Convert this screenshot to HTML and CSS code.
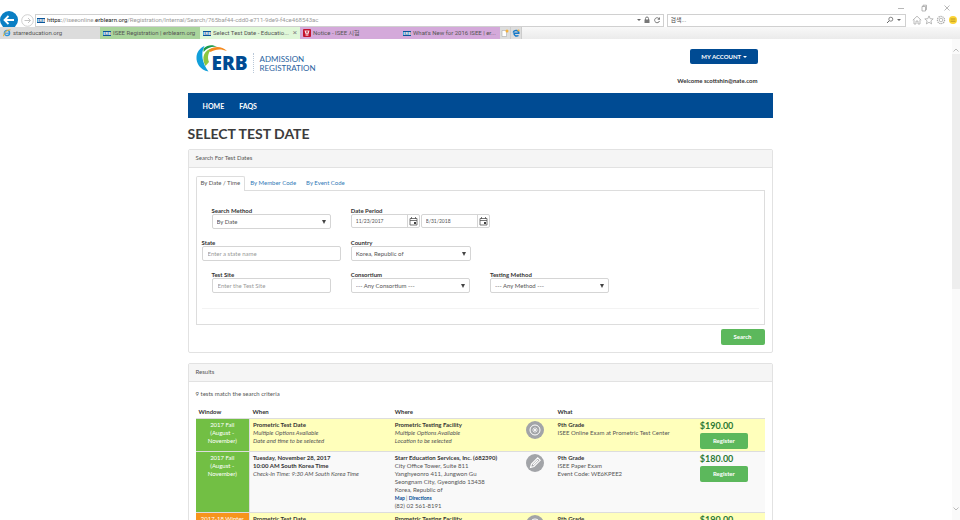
FILE: index.html
```html
<!DOCTYPE html>
<html lang="en">
	<head>
		<meta charset="UTF-8">
		<title>Select Test Date - Education Records Bureau</title>
		<link rel="stylesheet" href="styles.css">
	</head>
	<body>
		<!-- browser bar -->
		<div class="browser">
			<div class="wincontrols">
				<button class="win" aria-label="Minimize"><svg viewBox="0 0 8 8"><path d="M1 4.5h6"/></svg></button>
				<button class="win" aria-label="Restore"><svg viewBox="0 0 8 8"><path d="M2 2.5h3.5v4.5H2zM3 2.500V1.200h3.500v4.500H5.500"/></svg></button>
				<button class="win" aria-label="Close"><svg viewBox="0 0 8 8"><path d="M1.500 1.500l5 5M6.500 1.500l-5 5"/></svg></button>
			</div>
			<div class="address">
				<button class="back" aria-label="Back"><svg viewBox="0 0 18 18"><circle cx="9" cy="9" r="9" fill="#0a7fc4"/><path d="M14 9H5M8.500 5L4.500 9l4 4" fill="none" stroke="#fff" stroke-width="1.800"/></svg></button>
				<button class="forward" aria-label="Forward"><svg viewBox="0 0 13 13"><circle cx="6.500" cy="6.500" r="5.800" fill="#fff" stroke="#c4c4c4" stroke-width=".8"/><path d="M3.500 6.500h6M7 4l2.500 2.500L7 9" fill="none" stroke="#c4c4c4"/></svg></button>
				<div class="url">
					<span class="fav">ERB</span>
					<p><b>https:</b>//iseeonline.<b>erblearn.org</b>/Registration/Internal/Search/765baf44-cdd0-e711-9de9-f4ce468543ac</p>
					<span class="drop"></span>
					<svg class="small" viewBox="0 0 8 8"><path d="M1.500 3.500h5v3.500h-5z" fill="#777"/><path d="M2.500 4V2.500a1.500 1.500 0 0 1 3 0V4" fill="none" stroke="#777"/></svg>
					<svg class="small" viewBox="0 0 8 8"><path d="M6.300 3A2.500 2.500 0 1 0 6.500 5" fill="none" stroke="#777"/><path d="M7 1v2.700H4.300z" fill="#777"/></svg>
				</div>
				<div class="find">
					<input type="text" aria-label="Web search" placeholder="검색...">
					<svg class="small" viewBox="0 0 8 8"><circle cx="4.800" cy="3.200" r="2" fill="none" stroke="#666" stroke-width=".8"/><path d="M3.300 4.700L1 7" stroke="#666"/></svg>
					<span class="drop"></span>
				</div>
				<div class="tools">
					<svg viewBox="0 0 10 10"><path d="M.800 5.200L5 1.200l4.200 4M2 4.500V9h2V6h2v3h2V4.500" fill="none" stroke="#aaa" stroke-width=".8"/></svg>
					<svg viewBox="0 0 10 10"><path d="M5 .9l1.200 2.800 3 .2-2.300 2 .7 3L5 7.300 2.400 8.900l.7-3L.800 3.900l3-.2z" fill="none" stroke="#aaa" stroke-width=".8"/></svg>
					<svg viewBox="0 0 10 10"><circle cx="5" cy="5" r="3.600" fill="none" stroke="#aaa" stroke-width="1.200" stroke-dasharray="1.300 .7"/><circle cx="5" cy="5" r="1.800" fill="none" stroke="#aaa" stroke-width=".8"/></svg>
					<svg viewBox="0 0 10 10"><circle cx="5" cy="5" r="4" fill="#fbd436"/><path d="M2.500 4h5M2.500 6.200h5" stroke="#a8871c" stroke-width=".8"/></svg>
				</div>
			</div>
			<div class="tabs">
				<a href="#" class="tab gray"><svg class="ie" viewBox="0 0 8 8"><circle cx="4" cy="4" r="2.600" fill="none" stroke="#2a93dc" stroke-width="1.400"/><path d="M2 4.200h4.500" stroke="#2a93dc"/><path d="M.500 7.200C1 3 4 .8 7.500.800" fill="none" stroke="#efb52c"/></svg>starreducation.org</a>
				<a href="#" class="tab green"><span class="fav">ERB</span>ISEE Registration | erblearn.org</a>
				<a href="#" class="tab current"><span class="fav">ERB</span>Select Test Date - Educatio...<i>×</i></a>
				<a href="#" class="tab purple"><svg class="ie" viewBox="0 0 8 8"><rect width="8" height="8" rx="1" fill="#c4122e"/><path d="M1.500 2h5M2 4h4M3.200 4v3M4.800 4v3M2.500 2v2M5.500 2v2" stroke="#fff" stroke-width=".8"/></svg>Notice - ISEE 시험</a>
				<a href="#" class="tab purple"><span class="fav">ERB</span>What's New for 2016 ISEE | er...</a>
				<button class="newtab" aria-label="New tab"><svg viewBox="0 0 8 8"><path d="M1 1.500h4.500v6H1z" fill="#fff" stroke="#aaa" stroke-width=".6"/><circle cx="6" cy="2" r="1.500" fill="#f4b13c"/></svg></button>
				<button class="newtab" aria-label="Open in Edge"><svg viewBox="0 0 8 8"><path d="M1.500 4.300h5.300C7 1 2 .5 1.200 3.500M2 4.300C2 7.500 5 7.500 6.500 6.500" fill="none" stroke="#1478c8" stroke-width="1.500"/><circle cx="6.500" cy="1.500" r="1.100" fill="#f4b13c"/></svg></button>
			</div>
		</div>

		<div class="view">
			<div class="page">
				<div class="container">
					<div class="top">
						<a href="#" class="logo">
							<svg viewBox="0 0 32 28">
								<path d="M12.500 26.500C4 25 0 18 .5 12 .9 6.500 4 3 8.500 1 4.500 8 6 18 12.500 26.500z" fill="#119fda"/>
								<path d="M9.500 21C5 13 7.500 5 17 3 12 7 11 12 13 17z" fill="#8cc63f"/>
								<path d="M7.500 3.500C12-.5 17-.3 21 2 16 1.300 11.500 2.500 7.500 7z" fill="#1b9a4b"/>
								<path d="M13 5C18 .8 26 1 31 6 25 3.500 19 4 14.500 7z" fill="#f58a1f"/>
							</svg>
							<strong>ERB</strong>
							<span>ADMISSION<br>REGISTRATION</span>
						</a>
						<div class="user">
							<button class="account">MY ACCOUNT <i class="caret"></i></button>
							<p>Welcome scottshin@nate.com</p>
						</div>
					</div>
					<nav>
						<a href="#">HOME</a>
						<a href="#">FAQS</a>
					</nav>
					<h1>SELECT TEST DATE</h1>

					<!-- search -->
					<div class="panel">
						<h2>Search For Test Dates</h2>
						<form class="body">
							<div class="subtabs">
								<a href="#" class="on">By Date / Time</a>
								<a href="#">By Member Code</a>
								<a href="#">By Event Code</a>
							</div>
							<div class="pane">
								<div class="fields">
									<div class="field">
										<label for="method">Search Method</label>
										<div class="select"><select id="method"><option>By Date</option></select></div>
									</div>
									<div class="field wide">
										<label for="from">Date Period</label>
										<div class="dates">
											<div class="date">
												<input type="text" id="from" value="11/23/2017">
												<button type="button" aria-label="Pick start date"><svg viewBox="0 0 9 9"><path d="M1 1.500h7v6.500H1zM1 3.500h7M2.500 0v2M6.500 0v2" fill="none" stroke="#555" stroke-width=".8"/><path d="M5 5h2v2H5z" fill="#444"/></svg></button>
											</div>
											<div class="date">
												<input type="text" aria-label="End date" value="8/31/2018">
												<button type="button" aria-label="Pick end date"><svg viewBox="0 0 9 9"><path d="M1 1.500h7v6.500H1zM1 3.500h7M2.500 0v2M6.500 0v2" fill="none" stroke="#555" stroke-width=".8"/><path d="M5 5h2v2H5z" fill="#444"/></svg></button>
											</div>
										</div>
									</div>
									<div class="field flush">
										<label for="state">State</label>
										<input type="text" id="state" placeholder="Enter a state name">
									</div>
									<div class="field wide">
										<label for="country">Country</label>
										<div class="select half"><select id="country"><option>Korea, Republic of</option></select></div>
									</div>
									<div class="field">
										<label for="site">Test Site</label>
										<input type="text" id="site" placeholder="Enter the Test Site">
									</div>
									<div class="field">
										<label for="consortium">Consortium</label>
										<div class="select"><select id="consortium"><option>--- Any Consortium ---</option></select></div>
									</div>
									<div class="field">
										<label for="testing">Testing Method</label>
										<div class="select"><select id="testing"><option>--- Any Method ---</option></select></div>
									</div>
								</div>
							</div>
							<div class="actions"><button type="button" class="btn">Search</button></div>
						</form>
					</div>

					<!-- results -->
					<div class="panel">
						<h2>Results</h2>
						<div class="body">
							<p class="count">9 tests match the search criteria</p>
							<table>
								<thead>
									<tr>
										<th class="c1">Window</th>
										<th class="c2">When</th>
										<th class="c3">Where</th>
										<th class="c4"></th>
										<th class="c5">What</th>
										<th class="c6"></th>
									</tr>
								</thead>
								<tbody>
									<tr class="yellow">
										<td class="window">2017 Fall<br>(August -<br>November)</td>
										<td><b>Prometric Test Date</b><br><em>Multiple Options Available<br>Date and time to be selected</em></td>
										<td><b>Prometric Testing Facility</b><br><em>Multiple Options Available<br>Location to be selected</em></td>
										<td><svg class="kind" viewBox="0 0 18 18"><circle cx="9" cy="9" r="9" fill="#a2a4a8"/><circle cx="9" cy="9" r="5" fill="none" stroke="#fff"/><path d="M9 6v6M6 9h6M7 7l4 4M11 7l-4 4" stroke="#fff" stroke-width=".7"/></svg></td>
										<td><b>9th Grade</b><br>ISEE Online Exam at Prometric Test Center</td>
										<td><strong class="price">$190.00</strong><button class="btn register">Register</button></td>
									</tr>
									<tr>
										<td class="window">2017 Fall<br>(August -<br>November)</td>
										<td><b>Tuesday, November 28, 2017<br>10:00 AM South Korea Time</b><br><em>Check-In Time: 9:30 AM South Korea Time</em></td>
										<td><b>Starr Education Services, Inc. (682390)</b><br>City Office Tower, Suite 811<br>Yanghyeonro 411, Jungwon Gu<br>Seongnam City, Gyeongido 13438<br>Korea, Republic of<br><span class="links"><a href="#">Map</a> | <a href="#">Directions</a></span><br>(82) 02 561-8191</td>
										<td><svg class="kind" viewBox="0 0 18 18"><circle cx="9" cy="9" r="9" fill="#a2a4a8"/><path d="M4.500 13.500l1-3.500L11.700 3.800l2.500 2.500L8 12.500zM7 11l5-5" fill="none" stroke="#fff" stroke-width="1.100"/></svg></td>
										<td><b>9th Grade</b><br>ISEE Paper Exam<br>Event Code: WE6KPEE2</td>
										<td><strong class="price">$180.00</strong><button class="btn register">Register</button></td>
									</tr>
									<tr class="yellow">
										<td class="window winter">2017-18 Winter<br>(December -<br>March)</td>
										<td><b>Prometric Test Date</b><br><em>Multiple Options Available<br>Date and time to be selected</em></td>
										<td><b>Prometric Testing Facility</b><br><em>Multiple Options Available<br>Location to be selected</em></td>
										<td><svg class="kind" viewBox="0 0 18 18"><circle cx="9" cy="9" r="9" fill="#a2a4a8"/><circle cx="9" cy="9" r="5" fill="none" stroke="#fff"/><path d="M9 6v6M6 9h6M7 7l4 4M11 7l-4 4" stroke="#fff" stroke-width=".7"/></svg></td>
										<td><b>9th Grade</b><br>ISEE Online Exam at Prometric Test Center</td>
										<td><strong class="price">$190.00</strong><button class="btn register">Register</button></td>
									</tr>
								</tbody>
							</table>
						</div>
					</div>
				</div>
			</div>
			<div class="scroll">
				<svg viewBox="0 0 8 8"><path d="M1.500 5.500L4 3l2.500 2.500"/></svg>
				<div class="track"><div class="thumb"></div></div>
				<svg viewBox="0 0 8 8"><path d="M1.500 2.500L4 5l2.500-2.500"/></svg>
			</div>
		</div>
	</body>
</html>
```
FILE: styles.css
```css
*{
	padding:0;
	margin:0;
	box-sizing:border-box;
}
body{
	height:100vh;
	display:flex;
	flex-direction:column;
	overflow:hidden;
	background:#fff;
	color:#555;
	font:6px/8px Lato,"Noto Sans CJK KR",sans-serif;
}
a{
	color:#337ab7;
	text-decoration:none;
}
button,input,select{
	font:inherit;
	color:inherit;
	border:none;
	background:none;
}
svg{
	display:block;
	flex:none;
}

/* browser bar */
.browser{
	font-family:Roboto,"Noto Sans CJK KR",sans-serif;
}
.wincontrols{
	height:13px;
	display:flex;
	justify-content:flex-end;
	gap:15px;
	padding:2px 9px 0 0;
}
.win svg{
	width:8px;
	height:8px;
	fill:none;
	stroke:#999;
	stroke-width:.7;
}
.address{
	height:14px;
	display:flex;
	align-items:center;
	padding-right:2px;
}
.back svg{
	width:18px;
	height:18px;
}
.forward{
	margin:0 1px 0 3px;
}
.forward svg{
	width:13px;
	height:13px;
}
.url,.find{
	height:13px;
	display:flex;
	align-items:center;
	border:1px solid #d0d0d0;
	background:#fff;
}
.url{
	flex:1;
	gap:2px;
	padding:0 2px 0 1px;
	color:#999;
}
.url p{
	flex:1;
}
.url b{
	font-weight:normal;
	color:#222;
}
.find{
	width:25%;
	margin-left:3px;
	padding:0 4px 0 3px;
	gap:3px;
}
.find input{
	flex:1;
	min-width:0;
}
.find input::placeholder{
	color:#444;
}
.small{
	width:8px;
	height:8px;
}
.drop{
	border:2px solid transparent;
	border-top-color:#666;
	border-bottom:none;
}
.tools{
	display:flex;
	gap:2px;
	margin-left:6px;
}
.tools svg{
	width:10px;
	height:10px;
}
.tabs{
	height:12px;
	display:flex;
	background:linear-gradient(#f8f8f8,#ebebeb);
}
.tab{
	width:100px;
	display:flex;
	align-items:center;
	gap:2px;
	padding-left:3px;
	color:#555;
	white-space:nowrap;
}
.tab i{
	margin:0 3px 0 auto;
	font-style:normal;
	font-size:8px;
	color:#888;
}
.gray{
	background:#dcdcdc;
}
.green{
	background:#a9d49c;
}
.current{
	background:#dff7d8;
}
.purple{
	background:#d4a9da;
}
.fav{
	width:8px;
	height:5px;
	background:#0a5599;
	color:#fff;
	font-size:4px;
	line-height:5px;
	font-weight:bold;
	text-align:center;
}
.ie{
	width:8px;
	height:8px;
}
.newtab{
	width:11px;
	padding:0 1px;
	background:#ddd;
	border-right:1px solid #ccc;
}
.newtab svg{
	width:8px;
	height:8px;
}

/* page */
.view{
	flex:1;
	min-height:0;
	display:flex;
}
.page{
	flex:1;
	overflow:hidden;
	padding-left:8px;
}
.container{
	max-width:585px;
	margin:0 auto;
}
.top{
	height:54px;
	display:flex;
	justify-content:space-between;
	padding:7px 15px 0 8px;
}
.logo{
	height:27px;
	display:flex;
	align-items:flex-end;
}
.logo svg{
	width:32px;
	height:28px;
	margin-right:-16px;
}
.logo strong{
	font:800 19px/20px "Open Sans",sans-serif;
	color:#004b93;
	z-index:1;
}
.logo span{
	margin-left:5px;
	padding:2px 0 0 6px;
	border-left:1px dotted #b9c8d8;
	font-size:8px;
	line-height:9px;
	color:#2a62a0;
}
.user{
	padding-top:3px;
	text-align:right;
}
.user p{
	margin-top:13px;
	font-weight:bold;
	color:#333;
}
.account{
	height:15px;
	padding:0 11px;
	border-radius:2px;
	background:#004b93;
	color:#fff;
	font-weight:bold;
}
.caret{
	display:inline-block;
	border:2px solid transparent;
	border-top-color:#fff;
	border-bottom:none;
	vertical-align:middle;
}
nav{
	height:25px;
	display:flex;
	align-items:center;
	gap:15px;
	padding-left:15px;
	background:#004b93;
}
nav a{
	color:#fff;
	font-size:7px;
	font-weight:bold;
}
h1{
	margin:8px 0 7px;
	font-size:14px;
	line-height:16px;
	color:#3c3c3c;
}
.panel{
	margin-bottom:10px;
	border:1px solid #e2e2e2;
	border-radius:2px;
}
.panel h2{
	padding:4px 7px 5px;
	border-bottom:1px solid #e2e2e2;
	background:#f5f5f5;
	font-size:6px;
	font-weight:normal;
}
.body{
	padding:8px 7px 7px;
}
.subtabs{
	display:flex;
}
.subtabs a{
	height:14px;
	padding:2px 4px;
	border:1px solid transparent;
	border-bottom:none;
}
.subtabs .on{
	height:15px;
	margin-bottom:-1px;
	border-color:#ddd;
	border-radius:2px 2px 0 0;
	background:#fff;
	color:#555;
}
.pane{
	padding:16px 5px 15px;
	border:1px solid #ddd;
}
.fields{
	display:grid;
	grid-template-columns:repeat(4,1fr);
	row-gap:10px;
	padding-bottom:15px;
	border-bottom:1px solid #f3f3f3;
}
.field{
	padding:0 10px;
}
.flush{
	padding:0;
}
.wide{
	grid-column:span 3;
}
.field label{
	display:block;
	line-height:7px;
	font-weight:bold;
	color:#333;
}
.field > input,.select{
	width:100%;
	height:15px;
	border:1px solid #d5d5d5;
	border-radius:2px;
}
.field > input{
	padding:0 5px;
}
.field input::placeholder{
	color:#999;
}
.select{
	position:relative;
}
.half{
	max-width:120px;
}
.select select{
	width:100%;
	height:100%;
	padding:0 4px;
	appearance:none;
}
.select::after{
	content:"";
	position:absolute;
	right:4px;
	top:5px;
	border:2px solid transparent;
	border-top:4px solid #444;
	border-bottom:none;
}
.dates{
	display:flex;
	gap:1px;
}
.date{
	width:69px;
	height:14px;
	display:flex;
	border:1px solid #d5d5d5;
	border-radius:2px;
}
.date input{
	flex:1;
	min-width:0;
	padding-left:4px;
	font-size:5px;
}
.date button{
	width:12px;
	padding:0 1px;
	border-left:1px solid #d5d5d5;
}
.date svg{
	width:9px;
	height:9px;
}
.actions{
	margin-top:4px;
	text-align:right;
}
.btn{
	min-width:44px;
	height:16px;
	border-radius:2px;
	background:#5cb85c;
	color:#fff;
	font-weight:bold;
}

/* results */
.count{
	margin-bottom:10px;
}
table{
	width:100%;
	table-layout:fixed;
	border-collapse:collapse;
}
th{
	padding:0 3px 2px;
	text-align:left;
	color:#333;
}
.c1{
	width:54px;
}
.c2{
	width:25%;
}
.c3{
	width:23%;
}
.c4{
	width:32px;
}
.c5{
	width:25%;
}
td{
	padding:2px 3px;
	border-top:1px solid #ddd;
	vertical-align:top;
	background:#f9f9f9;
	white-space:nowrap;
}
td b{
	color:#333;
}
.yellow td{
	background:#ffffbb;
}
td.window,.yellow .window{
	background:#72bf44;
	border-right:1px solid #ddd;
	color:#fff;
	text-align:center;
}
.yellow .winter{
	background:#f7941d;
}
.kind{
	width:18px;
	height:18px;
}
.price{
	display:block;
	font-size:9px;
	line-height:10px;
	color:#2c7a35;
}
.register{
	width:48px;
	margin-top:2px;
	display:block;
}
.links{
	font-size:5px;
	line-height:5px;
}
.links a{
	color:#004b93;
	font-weight:bold;
}

/* scrollbar */
.scroll{
	width:8px;
	display:flex;
	flex-direction:column;
	padding:7px 0;
	background:#fafafa;
}
.scroll svg{
	width:8px;
	height:8px;
	fill:none;
	stroke:#bbb;
}
.track{
	flex:1;
}
.thumb{
	height:52%;
	background:#eee;
}
```
